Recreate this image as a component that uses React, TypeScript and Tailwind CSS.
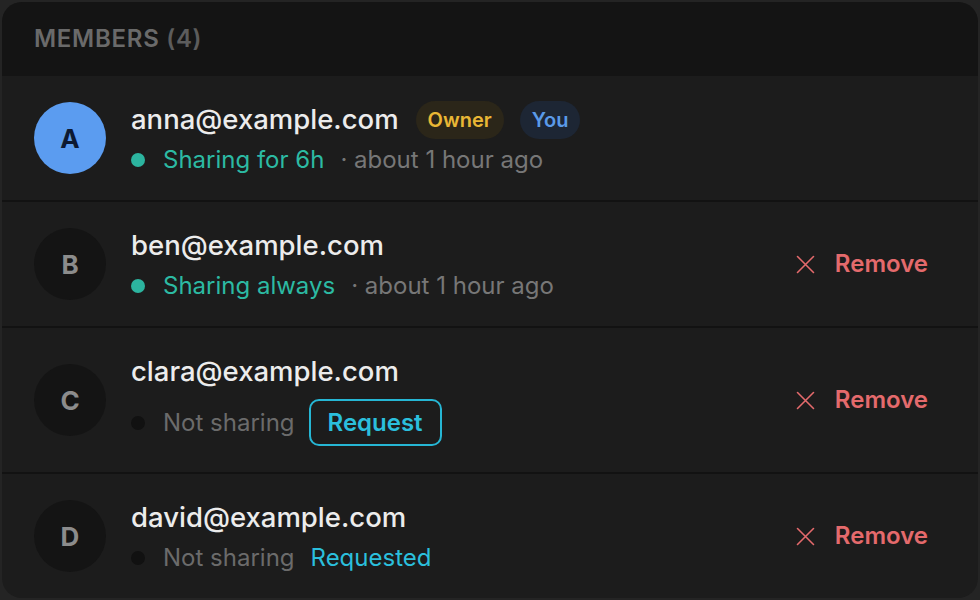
type Member = {
  letter: string;
  email: string;
  me?: boolean;
  status: "sharing" | "not";
  statusText: string;
  ago?: string;
  action?: "request" | "requested";
  removable?: boolean;
};

const members: Member[] = [
  { letter: "A", email: "anna@example.com", me: true, status: "sharing", statusText: "Sharing for 6h", ago: "about 1 hour ago" },
  { letter: "B", email: "ben@example.com", status: "sharing", statusText: "Sharing always", ago: "about 1 hour ago", removable: true },
  { letter: "C", email: "clara@example.com", status: "not", statusText: "Not sharing", action: "request", removable: true },
  { letter: "D", email: "david@example.com", status: "not", statusText: "Not sharing", action: "requested", removable: true },
];

function RemoveButton() {
  return (
    <button className="flex items-center gap-[20px] text-[#e46a6c] font-semibold text-[24px]">
      <svg width="19" height="19" viewBox="0 0 19 19" fill="none" stroke="currentColor" strokeWidth="1.6" strokeLinecap="round">
        <path d="M1.5 1.5l16 16M17.5 1.5l-16 16" />
      </svg>
      Remove
    </button>
  );
}

function Row({ m, last }: { m: Member; last: boolean }) {
  return (
    <div
      className={
        "flex items-center pl-[32px] pr-[50px] " +
        (m.action === "request" ? "h-[146px] " : last ? "h-[124px] " : "h-[126px] ") +
        (last ? "" : "border-b-2 border-[#121212]")
      }
    >
      <div
        className={
          "w-[72px] h-[72px] rounded-full flex items-center justify-center text-[26px] font-bold shrink-0 " +
          (m.me ? "bg-[#5b9cf0] text-[#0d1a33]" : "bg-[#141414] text-[#8c8c8c]")
        }
      >
        {m.letter}
      </div>
      <div className="ml-[25px] flex flex-col flex-1">
        <div className={"flex items-center gap-[17px] h-[38px] " + (m.action === "request" ? "-mt-[1px]" : "mt-[2px]")}>
          <span className="text-[27.5px] text-[#ececec] font-medium">{m.email}</span>
          {m.me && (
            <div className="flex items-center gap-[16px]">
              <span className="rounded-full bg-[#2b2619] text-[#e9b735] text-[20px] font-semibold px-[12px] h-[38px] leading-[38px]">
                Owner
              </span>
              <span className="rounded-full bg-[#1d2634] text-[#5a9ae8] text-[20px] font-semibold px-[12px] h-[38px] leading-[38px]">
                You
              </span>
            </div>
          )}
        </div>
        <div className={"flex items-center " + (m.action === "request" ? "mt-[8px]" : "mt-[3px]")}>
          <span
            className={
              "w-[14px] h-[14px] rounded-full shrink-0 " + (m.status === "sharing" ? "bg-[#2cb49f]" : "bg-[#111111]")
            }
          />
          <span
            className={
              "ml-[18px] text-[24px] " + (m.status === "sharing" ? "text-[#2cbaa3]" : "text-[#6b6b6b]")
            }
          >
            {m.statusText}
          </span>
          {m.ago && <span className="ml-[16px] text-[24px] text-[#777777]">· {m.ago}</span>}
          {m.action === "request" && (
            <button className="ml-[14px] h-[47px] px-[17px] rounded-[10px] border-2 border-[#26b6d4] text-[#2bbfdc] text-[24px] font-semibold">
              Request
            </button>
          )}
          {m.action === "requested" && <span className="ml-[16px] text-[24px] text-[#2bbfdc]">Requested</span>}
        </div>
      </div>
      {m.removable && <RemoveButton />}
    </div>
  );
}

export default function App() {
  return (
    <div className="w-[980px] h-[600px] bg-[#242424] p-[2px]" style={{ fontFamily: "Inter, 'Noto Sans', sans-serif" }}>
      <div className="h-full rounded-[20px] bg-[#1c1c1c] overflow-hidden flex flex-col">
        <div className="h-[74px] bg-[#141414] flex items-center pl-[32px] shrink-0">
          <span className="text-[24px] font-semibold tracking-[0.03em] text-[#6a6a6a]">
            MEMBERS <span className="text-[#5c5c5c]">(4)</span>
          </span>
        </div>
        {members.map((m, i) => (
          <Row key={m.email} m={m} last={i === members.length - 1} />
        ))}
      </div>
    </div>
  );
}
